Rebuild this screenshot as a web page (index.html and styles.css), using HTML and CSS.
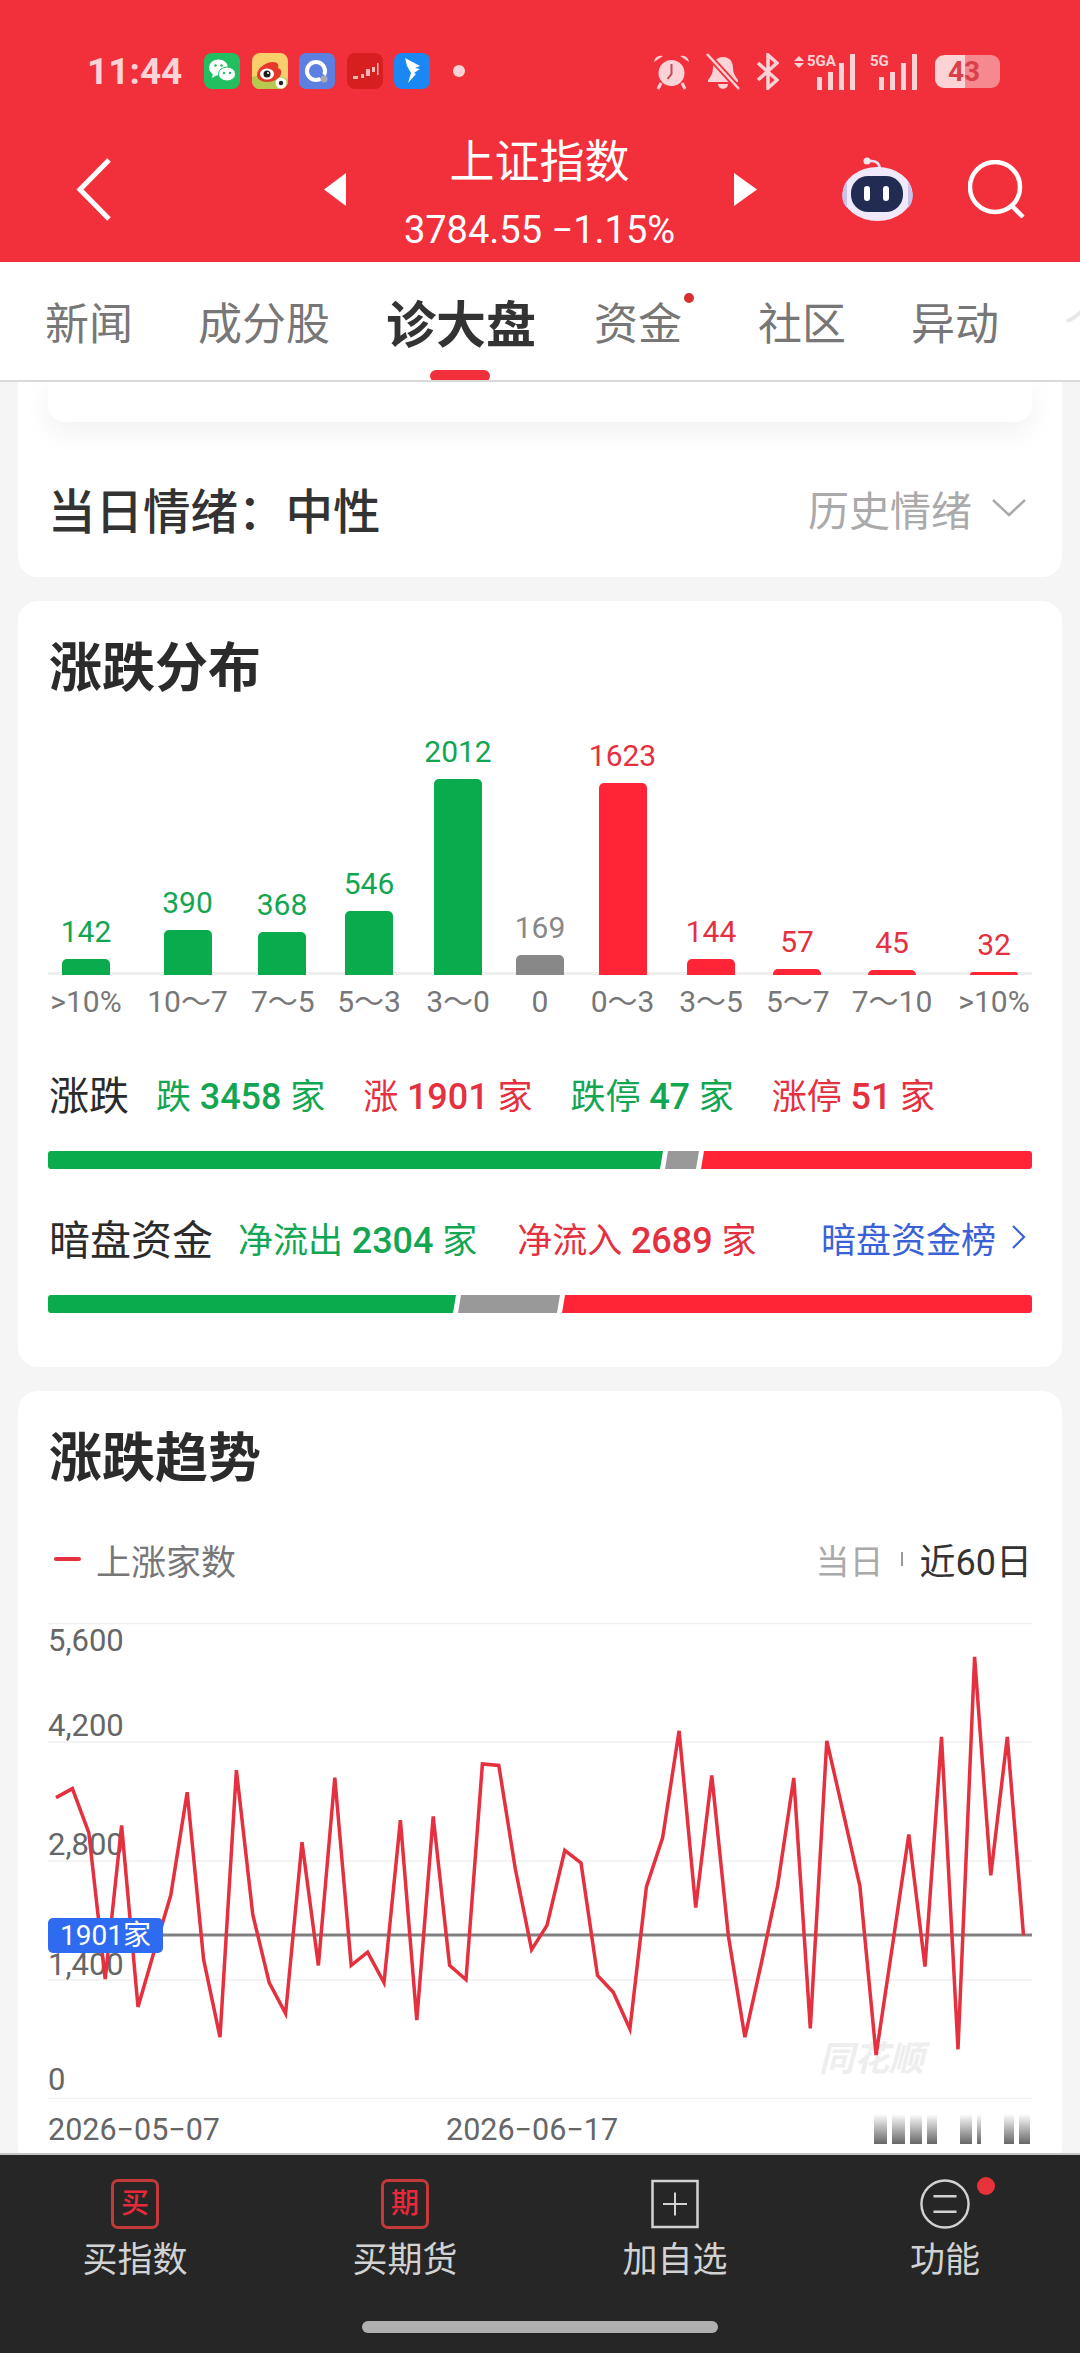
FILE: index.html
```html
<!DOCTYPE html>
<html lang="zh-CN">
<head>
    <meta charset="UTF-8">
    <meta name="viewport" content="width=device-width, initial-scale=1.0">
    <title>上证指数</title>
    <link rel="stylesheet" href="styles.css">
</head>
<body>
<div class="page">
    <header class="top">
        <div class="status">
            <span class="clock">11:44</span>
            <div class="app-icons">
                <svg width="36" height="36" viewBox="0 0 36 36"><rect width="36" height="36" rx="8" fill="#21bf5f"/><ellipse cx="14.500" cy="14.500" rx="9.500" ry="8" fill="#fff"/><path d="M9 20l-1 5 5-3z" fill="#fff"/><ellipse cx="23" cy="21" rx="8.500" ry="7" fill="#fff" stroke="#21bf5f"/><circle cx="11.500" cy="12.500" r="1.300" fill="#21bf5f"/><circle cx="17.500" cy="12.500" r="1.300" fill="#21bf5f"/><circle cx="20" cy="20" r="1.200" fill="#21bf5f"/><circle cx="26" cy="20" r="1.200" fill="#21bf5f"/></svg>
                <svg width="36" height="36" viewBox="0 0 36 36"><rect width="36" height="36" rx="8" fill="#f9cf6c"/><path d="M0 24q18-6 36 2v2a8 8 0 0 1-8 8H8a8 8 0 0 1-8-8z" fill="#b7c94f"/><path d="M5 22c0-7 9-13 16-13 5 0 6 3 5 6 3 1 4 3 3 6-1 5-8 8-14 8-6 0-10-3-10-7z" fill="#e5392c"/><ellipse cx="15" cy="21" rx="7" ry="5.500" fill="#fff"/><circle cx="15" cy="21" r="3.500" fill="#1c1c1c"/><circle cx="16" cy="20" r="1" fill="#fff"/><circle cx="29" cy="30" r="5.500" fill="#fff"/><circle cx="29" cy="30" r="2.200" fill="#222"/></svg>
                <svg width="36" height="36" viewBox="0 0 36 36"><rect width="36" height="36" rx="7" fill="#5c80e2"/><circle cx="17" cy="18" r="9" fill="none" stroke="#fff" stroke-width="4"/><path d="M17 18l9 8" stroke="#5c80e2" stroke-width="5"/><circle cx="25" cy="26" r="3.500" fill="#a9a9b5"/></svg>
                <svg width="36" height="36" viewBox="0 0 36 36"><rect width="36" height="36" rx="8" fill="#d81f20"/><path d="M6 23h5v3H6zM14 21h3v4h-3zM19 16h4v7h-4zM25 14h3v5h-3zM30 10h1.500v12H30z" fill="#f8b6b6"/></svg>
                <svg width="36" height="36" viewBox="0 0 36 36"><rect width="36" height="36" rx="8" fill="#1b87f3"/><path d="M11 5l15 8-5 2 5 1-6 4 2 1-8 9 3-10-4-7z" fill="#fff"/></svg>
            </div>
            <span class="status-dot"></span>
            <div class="sys-icons">
                <svg width="37" height="37" viewBox="0 0 37 37"><circle cx="18.500" cy="20" r="13" fill="#fbd3d6"/><path d="M18.500 11v10l-4 5" fill="none" stroke="#c8464e" stroke-width="2"/><path d="M1 9a7 7 0 0 1 9-6zM36 9a7 7 0 0 0-9-6z" fill="#fbd3d6"/><path d="M8 30l-3 6M29 30l3 6" stroke="#fbd3d6" stroke-width="3"/></svg>
                <svg width="36" height="37" viewBox="0 0 36 37"><path d="M18 4c7 0 10 5 10 11 0 5 2 8 5 12v2H3v-2c3-4 5-7 5-12 0-6 3-11 10-11z" fill="#fbd3d6"/><path d="M13 31a5 5 0 0 0 10 0z" fill="#fbd3d6"/><path d="M2 1l32 35" stroke="#f2303b" stroke-width="6"/><path d="M2 1l32 35" stroke="#fbd3d6" stroke-width="2.500"/></svg>
                <svg width="23" height="37" viewBox="0 0 23 37"><path d="M2 10l19 17-9 8V2l9 8L2 27" fill="none" stroke="#fbd3d6" stroke-width="3.500"/></svg>
                <div class="signal signal-a">
                    <span class="updown"></span>
                    <span class="net">5GA</span>
                    <div class="bars"><i class="b1"></i><i class="b2"></i><i class="b3"></i><i class="b4"></i></div>
                </div>
                <div class="signal signal-b">
                    <span class="net">5G</span>
                    <div class="bars"><i class="b1"></i><i class="b2"></i><i class="b3"></i><i class="b4"></i></div>
                </div>
                <div class="battery"><span class="battery-num">43</span></div>
            </div>
        </div>
        <nav class="nav">
            <svg class="back" width="36" height="63" viewBox="0 0 36 63"><path d="M33 2L4 31.500 33 61" fill="none" stroke="#fff" stroke-width="5"/></svg>
            <div class="nav-center">
                <svg width="22" height="33" viewBox="0 0 22 33"><path d="M22 0v33L0 16.500z" fill="#fff"/></svg>
                <div class="nav-title">
                    <div class="index-name">上证指数</div>
                    <div class="index-price">3784.55 −1.15%</div>
                </div>
                <svg width="23" height="33" viewBox="0 0 23 33"><path d="M0 0v33l23-16.500z" fill="#fff"/></svg>
            </div>
            <div class="nav-right">
                <svg width="71" height="64" viewBox="0 0 71 64"><path d="M28 4q9-1 10 8" fill="none" stroke="#eadff0" stroke-width="2.500"/><circle cx="25" cy="4" r="3.500" fill="#f3e6ee"/><ellipse cx="35.500" cy="37" rx="35" ry="27" fill="#f0e9fa"/><path d="M1 34c-2 6 0 13 4 17V24c-2 3-3 6-4 10zM70 34c2 6 0 13-4 17V24c2 3 3 6 4 10z" fill="#c9c2ec"/><rect x="9" y="19" width="52" height="36" rx="17" fill="#222c52"/><rect x="22" y="29" width="6" height="15" rx="3" fill="#fff"/><rect x="41" y="29" width="6" height="15" rx="3" fill="#fff"/></svg>
                <svg width="58" height="58" viewBox="0 0 58 58"><circle cx="27" cy="27" r="25" fill="none" stroke="#fff" stroke-width="4.500"/><path d="M43 45l12 12" stroke="#fff" stroke-width="4.500"/></svg>
            </div>
        </nav>
    </header>

    <div class="tabs">
        <span class="tab">新闻</span>
        <span class="tab">成分股</span>
        <span class="tab tab-active">诊大盘</span>
        <span class="tab tab-dot">资金</span>
        <span class="tab">社区</span>
        <span class="tab">异动</span>
        <span class="tab tab-fade">个股</span>
    </div>

    <main class="content">
        <section class="card card-mood">
            <div class="inner-card"></div>
            <div class="mood-row">
                <span class="mood-text">当日情绪：中性</span>
                <span class="mood-history">历史情绪
                    <svg width="34" height="18" viewBox="0 0 34 18"><path d="M1 1l16 15L33 1" fill="none" stroke="#aaa" stroke-width="2.500"/></svg>
                </span>
            </div>
        </section>

        <section class="card card-dist">
            <h2 class="card-title">涨跌分布</h2>
            <div class="dist-plot">
                <div class="dist-col green"><span class="dist-val">142</span><i style="height:16px"></i></div>
                <div class="dist-col green"><span class="dist-val">390</span><i style="height:45px"></i></div>
                <div class="dist-col green"><span class="dist-val">368</span><i style="height:43px"></i></div>
                <div class="dist-col green"><span class="dist-val">546</span><i style="height:64px"></i></div>
                <div class="dist-col green"><span class="dist-val">2012</span><i style="height:196px"></i></div>
                <div class="dist-col grey"><span class="dist-val">169</span><i style="height:20px"></i></div>
                <div class="dist-col red"><span class="dist-val">1623</span><i style="height:192px"></i></div>
                <div class="dist-col red"><span class="dist-val">144</span><i style="height:16px"></i></div>
                <div class="dist-col red"><span class="dist-val">57</span><i style="height:6px"></i></div>
                <div class="dist-col red"><span class="dist-val">45</span><i style="height:5px"></i></div>
                <div class="dist-col red"><span class="dist-val">32</span><i style="height:3px"></i></div>
            </div>
            <div class="dist-labels">
                <span>&gt;10%</span><span>10～7</span><span>7～5</span><span>5～3</span><span>3～0</span><span>0</span><span>0～3</span><span>3～5</span><span>5～7</span><span>7～10</span><span>&gt;10%</span>
            </div>

            <div class="stat-row stat-row-first">
                <span class="stat-name">涨跌</span>
                <span class="stat text-green">跌 <b>3458</b> 家</span>
                <span class="stat text-red">涨 <b>1901</b> 家</span>
                <span class="stat text-green">跌停 <b>47</b> 家</span>
                <span class="stat text-red">涨停 <b>51</b> 家</span>
            </div>
            <div class="ratio-bar">
                <span class="seg seg-green" style="width:615px"></span>
                <span class="seg seg-grey" style="width:34px"></span>
                <span class="seg seg-red" style="flex:1"></span>
            </div>

            <div class="stat-row stat-row-second">
                <span class="stat-name">暗盘资金</span>
                <span class="stat text-green">净流出 <b>2304</b> 家</span>
                <span class="stat text-red">净流入 <b>2689</b> 家</span>
                <span class="stat-link">暗盘资金榜
                    <svg width="14" height="24" viewBox="0 0 14 24"><path d="M1 1l11 11L1 23" fill="none" stroke="#3a62d6" stroke-width="2.200"/></svg>
                </span>
            </div>
            <div class="ratio-bar">
                <span class="seg seg-green" style="width:408px"></span>
                <span class="seg seg-grey" style="width:102px"></span>
                <span class="seg seg-red" style="flex:1"></span>
            </div>
        </section>

        <section class="card card-trend">
            <h2 class="card-title">涨跌趋势</h2>
            <div class="legend-row">
                <span class="legend"><i class="legend-dash"></i>上涨家数</span>
                <span class="range"><span class="range-off">当日</span><i class="range-sep"></i><span class="range-on">近60日</span></span>
            </div>
            <div class="chart">
                <svg class="chart-svg" width="984" height="478" viewBox="48 1622 984 478">
                    <g class="grid-lines">
                        <path d="M48 1624.500H1032M48 1743H1032M48 1862H1032M48 1981H1032M48 2099.500H1032"/>
                    </g>
                    <g class="y-labels">
                        <text x="48" y="1652">5,600</text>
                        <text x="48" y="1737">4,200</text>
                        <text x="48" y="1856">2,800</text>
                        <text x="48" y="1976">1,400</text>
                        <text x="48" y="2091">0</text>
                    </g>
                    <text class="watermark" x="819" y="2072">同花顺</text>
                    <path class="now-line" d="M160 1936H1032"/>
                    <polyline class="trend-line" points="56,1798.600 72.400,1789.600 88.800,1833.600 105.200,1980 121.600,1826.400 138,2007.900 154.400,1951.400 170.800,1896.100 187.200,1793.200 203.600,1960.400 220,2038.200 236.400,1771.100 252.800,1915.700 269.200,1983.600 285.600,2014.600 302,1843.200 318.400,1966.400 334.800,1778.600 351.200,1966.400 367.600,1953.200 384,1983.600 400.400,1821.100 416.800,2021.100 433.200,1817.500 449.600,1966.400 466,1980.700 482.400,1765 498.800,1766.400 515.200,1869.300 531.600,1950.700 547,1926.400 564.800,1851.400 581,1863.900 597.500,1976.400 613.300,1993.200 629.900,2030 646.400,1887.900 662.600,1838.900 679.100,1731.800 695.700,1908.600 711.800,1776.400 728.400,1937.100 744.900,2038.200 761.400,1963.900 777.600,1887.100 793.800,1778.900 810.300,2029.300 826.800,1741.800 843.400,1814.300 859.900,1887.100 876.100,2056.100 892.600,1945.700 908.800,1835.400 925,1967.500 941.500,1737.900 958,2050.400 974.600,1657.900 990.800,1876.400 1007.300,1737.900 1023.500,1936.100"/>
                </svg>
                <span class="now-badge">1901家</span>
            </div>
            <div class="dates">
                <span class="date">2026−05−07</span>
                <span class="date date-mid">2026−06−17</span>
                <div class="date-blur">
                    <i class="w13"></i><i class="w13"></i><i class="w12"></i><i class="w10"></i><i class="w12 gap-l"></i><i class="w4"></i><i class="w10 gap-l"></i><i class="w11"></i>
                </div>
            </div>
        </section>
    </main>

    <footer class="bottom">
        <div class="bottom-tabs">
            <div class="bottom-tab">
                <span class="trade-box">买</span>
                <span class="bottom-label">买指数</span>
            </div>
            <div class="bottom-tab">
                <span class="trade-box">期</span>
                <span class="bottom-label">买期货</span>
            </div>
            <div class="bottom-tab">
                <svg width="48" height="49" viewBox="0 0 48 49"><rect x="1.500" y="1.500" width="45" height="46" fill="none" stroke="#d2d2d2" stroke-width="2.500"/><path d="M24 13v23M12 24.500h24" stroke="#d2d2d2" stroke-width="2"/></svg>
                <span class="bottom-label">加自选</span>
            </div>
            <div class="bottom-tab bottom-tab-dot">
                <svg width="52" height="52" viewBox="0 0 52 52"><circle cx="26" cy="26" r="24.500" fill="none" stroke="#d2d2d2" stroke-width="2.500"/><path d="M14 18h24M14 34h24" stroke="#d2d2d2" stroke-width="2.500"/></svg>
                <span class="bottom-label">功能</span>
            </div>
        </div>
        <div class="home-bar"></div>
    </footer>
</div>
</body>
</html>
```

FILE: styles.css
```css
* {
    box-sizing: border-box;
}

body {
    margin: 0;
    font-family: Roboto, "Noto Sans CJK SC", sans-serif;
    color: #333;
    background-color: #f5f5f5;
}

.page {
    width: 1080px;
    height: 2353px;
    display: flex;
    flex-direction: column;
    overflow: hidden;
}

/* red header */
.top {
    height: 262px;
    flex: none;
    padding-top: 52px;
    background-color: #f2303b;
    color: #fff;
}

.status {
    display: flex;
    align-items: center;
    height: 38px;
    padding: 0 80px 0 87px;
}

.clock {
    font-size: 37px;
    font-weight: 700;
    color: #fbd3d6;
    width: 117px;
}

.app-icons {
    display: flex;
    gap: 11.500px;
}

.status-dot {
    width: 12px;
    height: 12px;
    margin-left: 23px;
    border-radius: 50%;
    background-color: #fbd3d6;
}

.sys-icons {
    display: flex;
    align-items: center;
    margin-left: auto;
    gap: 15px;
}

.signal {
    position: relative;
    height: 37px;
    display: flex;
    align-items: flex-end;
    color: #fbd3d6;
}

.signal-a {
    width: 61px;
    justify-content: flex-end;
}

.signal-b {
    width: 47px;
    justify-content: flex-end;
}

.updown {
    position: absolute;
    left: 0;
    top: 3px;
    width: 0;
    height: 0;
    border-left: 5px solid transparent;
    border-right: 5px solid transparent;
    border-bottom: 5px solid #fbd3d6;
}

.updown::after {
    content: "";
    position: absolute;
    left: -5px;
    top: 7px;
    border-left: 5px solid transparent;
    border-right: 5px solid transparent;
    border-top: 5px solid #fbd3d6;
}

.net {
    position: absolute;
    top: 0;
    font-size: 15px;
    line-height: 16px;
    font-weight: 700;
}

.signal-a .net {
    left: 13px;
}

.signal-b .net {
    left: 0;
}

.bars {
    display: flex;
    align-items: flex-end;
    gap: 6px;
}

.bars i {
    display: block;
    width: 5px;
    background-color: #fbd3d6;
}

.bars .b1 { height: 13px; }
.bars .b2 { height: 18px; }
.bars .b3 { height: 27px; }
.bars .b4 { height: 36px; }

.battery {
    position: relative;
    width: 65px;
    height: 33px;
    margin-left: 3px;
    border-radius: 9px;
    background: linear-gradient(to right, #fbd3d6 30px, #f6888f 30px);
}

.battery-num {
    position: absolute;
    left: 13px;
    top: 0;
    font-size: 28px;
    line-height: 33px;
    font-weight: 700;
    color: #d9404a;
}

.nav {
    display: grid;
    grid-template-columns: 1fr auto 1fr;
    align-items: center;
    margin-top: 46px;
    padding: 0 54px;
    height: 116px;
}

.back {
    margin: 0 0 10px 22px;
}

.nav-center {
    display: flex;
    align-items: center;
    gap: 58px;
}

.nav-center svg {
    margin-bottom: 10px;
}

.nav-title {
    width: 272px;
    text-align: center;
}

.index-name {
    font-size: 45px;
    line-height: 54px;
    margin-bottom: 18px;
}

.index-price {
    font-size: 38px;
    line-height: 44px;
    white-space: nowrap;
}

.nav-right {
    display: flex;
    justify-content: flex-end;
    align-items: center;
    gap: 55px;
    margin-bottom: 10px;
}

/* tab strip */
.tabs {
    flex: none;
    height: 120px;
    display: flex;
    align-items: center;
    gap: 65px;
    padding-left: 45px;
    background-color: #fff;
    border-bottom: 2px solid #d9d9d9;
    overflow: hidden;
}

.tab {
    flex: none;
    font-size: 44px;
    color: #777;
    position: relative;
}

.tab-active {
    font-size: 50px;
    font-weight: 700;
    color: #333;
    margin: 0 -7px 0 -9px;
}

.tab-active::after {
    content: "";
    position: absolute;
    left: 44px;
    bottom: -25px;
    width: 60px;
    height: 12px;
    border-radius: 6px;
    background-color: #f2303b;
}

.tab-dot {
    margin-right: 11px;
}

.tab-dot::after {
    content: "";
    position: absolute;
    right: -12px;
    top: 4px;
    width: 10px;
    height: 10px;
    border-radius: 50%;
    background-color: #d8302f;
}

.tab-fade {
    color: #e8e8e8;
}

/* scrolling part */
.content {
    flex: 1;
    min-height: 0;
    overflow: hidden;
    padding: 0 18px;
    display: flex;
    flex-direction: column;
    gap: 24px;
}

.card {
    flex: none;
    background-color: #fff;
    border-radius: 20px;
    padding: 0 30px;
}

.card-mood {
    border-radius: 0 0 20px 20px;
    padding-bottom: 42px;
}

.inner-card {
    height: 40px;
    border-radius: 0 0 16px 16px;
    background-color: #fff;
    box-shadow: 0 10px 28px rgba(0, 0, 0, 0.06);
}

.mood-row {
    display: flex;
    justify-content: space-between;
    align-items: center;
    height: 54px;
    margin-top: 59px;
}

.mood-text {
    font-size: 47.500px;
    font-weight: 500;
}

.mood-history {
    display: flex;
    align-items: center;
    gap: 20px;
    font-size: 41px;
    color: #aaa;
    padding-right: 6px;
}

.card-title {
    margin: 0;
    padding-left: 1px;
    font-size: 53px;
    line-height: 54px;
    font-weight: 700;
    color: #2b2b2b;
}

.card-dist {
    padding-top: 41px;
    padding-bottom: 54px;
}

.dist-plot,
.dist-labels {
    display: grid;
    grid-template-columns: 76px 127px 62px 112px 66px 98px 67px 110px 62px 128px 76px;
}

.dist-plot {
    height: 245px;
    margin-top: 34px;
    border-bottom: 3px solid #eee;
}

.dist-col {
    display: flex;
    flex-direction: column;
    justify-content: flex-end;
    align-items: center;
}

.dist-col i {
    display: block;
    width: 48px;
    margin-bottom: -3px;
    border-radius: 5px 5px 0 0;
}

.dist-val {
    font-size: 30px;
    line-height: 34px;
    margin-bottom: 10px;
}

.green .dist-val { color: #12a652; }
.green i { background-color: #0aab4c; }
.grey .dist-val { color: #888; }
.grey i { background-color: #888; }
.red .dist-val { color: #e4303f; }
.red i { background-color: #ff2436; }

.dist-labels {
    margin-top: 9px;
    font-size: 30px;
    line-height: 36px;
    color: #777;
    text-align: center;
    white-space: nowrap;
}

.stat-row {
    display: flex;
    align-items: center;
    height: 44px;
    white-space: nowrap;
}

.stat-row-first {
    margin-top: 51px;
}

.stat-row-second {
    margin-top: 46px;
}

.stat-name {
    font-size: 40px;
    color: #2b2b2b;
    padding-left: 1px;
}

.stat {
    font-size: 35px;
    margin-left: 38px;
}

.stat b {
    font-size: 36px;
    font-weight: 500;
}

.stat-name + .stat {
    margin-left: 27px;
}

.stat-row-second .stat-name {
    font-size: 41px;
}

.stat-row-second .stat {
    margin-left: 40px;
}

.stat-row-second .stat-name + .stat {
    margin-left: 25px;
}

.text-green { color: #12a652; }
.text-red { color: #e4303f; }

.stat-link {
    display: flex;
    align-items: center;
    gap: 16px;
    margin-left: auto;
    padding-right: 6px;
    font-size: 35px;
    color: #3a62d6;
}

.ratio-bar {
    display: flex;
    gap: 2px;
    height: 18px;
    margin-top: 36px;
}

.seg {
    display: block;
    height: 18px;
    flex: none;
}

.seg-green {
    background-color: #0aab4c;
    border-radius: 3px 0 0 3px;
    clip-path: polygon(0 0, 100% 0, calc(100% - 3px) 100%, 0 100%);
}

.seg-grey {
    background-color: #999;
    clip-path: polygon(3px 0, 100% 0, calc(100% - 3px) 100%, 0 100%);
}

.seg-red {
    background-color: #ff2436;
    border-radius: 0 3px 3px 0;
    clip-path: polygon(3px 0, 100% 0, 100% 100%, 0 100%);
}

.card-trend {
    padding-top: 41px;
    padding-bottom: 20px;
}

.legend-row {
    display: flex;
    justify-content: space-between;
    align-items: center;
    height: 40px;
    margin-top: 53px;
}

.legend {
    display: flex;
    align-items: center;
    gap: 15px;
    font-size: 35px;
    color: #777;
    padding-left: 6px;
}

.legend-dash {
    display: block;
    width: 27px;
    height: 4px;
    background-color: #e4303f;
    border-radius: 2px;
}

.range {
    display: flex;
    align-items: center;
    font-size: 34px;
}

.range-off {
    color: #aaa;
}

.range-sep {
    display: block;
    width: 2px;
    height: 14px;
    margin: 0 17px;
    background-color: #999;
}

.range-on {
    font-size: 36px;
    color: #333;
}

.chart {
    position: relative;
    margin-top: 42px;
    height: 478px;
}

.chart-svg {
    display: block;
}

.grid-lines path {
    fill: none;
    stroke: #efefef;
    stroke-width: 1.500;
}

.y-labels text {
    font-family: Roboto, sans-serif;
    font-size: 31px;
    fill: #666;
}

.watermark {
    font-family: "Noto Sans CJK SC", sans-serif;
    font-size: 35px;
    font-weight: 700;
    font-style: italic;
    fill: #eee;
}

.now-line {
    fill: none;
    stroke: #808080;
    stroke-width: 3;
}

.trend-line {
    fill: none;
    stroke: #e4303f;
    stroke-width: 3.500;
    stroke-linejoin: miter;
}

.now-badge {
    position: absolute;
    left: 0;
    top: 297px;
    width: 115px;
    height: 35px;
    border-radius: 5px;
    background-color: #2f6bf0;
    color: #fff;
    font-size: 28px;
    line-height: 35px;
    text-align: center;
    white-space: nowrap;
}

.dates {
    display: flex;
    align-items: center;
    height: 36px;
    margin-top: 12px;
}

.date {
    font-size: 30.500px;
    color: #666;
    white-space: nowrap;
}

.date-mid {
    margin-left: 226px;
}

.date-blur {
    display: flex;
    gap: 5px;
    height: 30px;
    margin-left: auto;
    padding-right: 2px;
}

.date-blur i {
    display: block;
    height: 30px;
    background: linear-gradient(to bottom, rgba(110, 110, 110, 0), #666);
}

.date-blur .w13 { width: 13px; }
.date-blur .w12 { width: 12px; }
.date-blur .w11 { width: 11px; }
.date-blur .w10 { width: 10px; }
.date-blur .w4 { width: 4px; }
.date-blur .gap-l { margin-left: 18px; }

/* bottom bar */
.bottom {
    flex: none;
    height: 200px;
    background-color: #262626;
    border-top: 2px solid #c4c4c4;
}

.bottom-tabs {
    display: grid;
    grid-template-columns: repeat(4, 1fr);
    padding-top: 24px;
}

.bottom-tab {
    position: relative;
    height: 110px;
    display: flex;
    flex-direction: column;
    align-items: center;
}

.bottom-tab svg,
.trade-box {
    height: 50px;
    flex: none;
}

.trade-box {
    width: 48px;
    border: 3px solid #c43a3a;
    border-radius: 7px;
    color: #e8293a;
    font-size: 28px;
    font-weight: 500;
    line-height: 44px;
    text-align: center;
}

.bottom-label {
    margin-top: 7px;
    font-size: 35px;
    line-height: 50px;
    color: #d2d2d2;
}

.bottom-tab-dot::after {
    content: "";
    position: absolute;
    left: 167px;
    top: -2px;
    width: 18px;
    height: 18px;
    border-radius: 50%;
    background-color: #e8323a;
}

.home-bar {
    width: 356px;
    height: 12px;
    margin: 32px auto 0;
    border-radius: 6px;
    background-color: #b0b0b0;
}
```
